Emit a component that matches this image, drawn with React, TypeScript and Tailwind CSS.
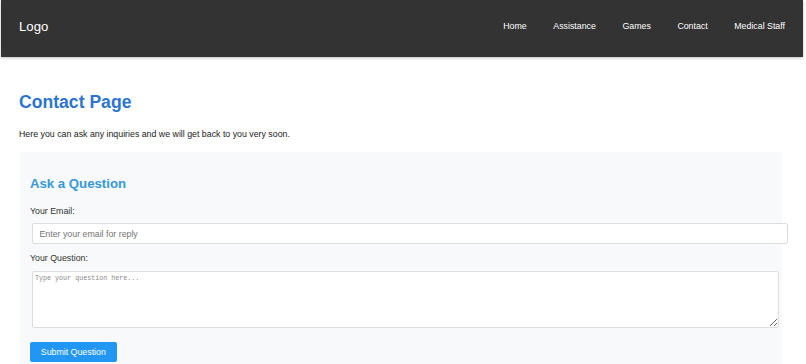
import { FC } from "react";

const Navbar: FC = () => {
  const nav_links = ["Home", "Assistance", "Games", "Contact", "Medical Staff"];

  return (
    <header className="ml-[1px] w-[802px] h-[57px] bg-[#333333] shadow-[0_1px_3px_rgba(0,0,0,0.25)] flex items-center justify-between pl-[18px] pr-[18px] pb-[4px]">
      <h1 className="text-white text-[13.2px] leading-[16px] font-normal">Logo</h1>
      <nav className="flex gap-[26.6px]">
        {nav_links.map((link) => (
          <a key={link} href="#" className="text-white text-[8.8px] leading-[11px]">
            {link}
          </a>
        ))}
      </nav>
    </header>
  );
};

const ContactForm: FC = () => {
  return (
    <section className="ml-[1px] mt-[12px] w-[762px] bg-[#f8f9fa] pl-[10px] pt-[24px] pb-[20px]">
      <h3 className="text-[#3498db] text-[13.2px] leading-[16px] font-bold">Ask a Question</h3>
      <label className="block mt-[14.5px] text-[8.8px] leading-[11px] text-[#333]">Your Email:</label>
      <input
        type="email"
        placeholder="Enter your email for reply"
        className="block ml-[2px] mt-[6px] w-[755.6px] h-[21px] px-[6.5px] bg-white border border-[#dddddd] rounded-[2px] text-[8.8px] placeholder:text-[#757575] outline-none"
      />
      <label className="block mt-[9px] text-[8.8px] leading-[11px] text-[#333]">Your Question:</label>
      <textarea
        placeholder="Type your question here..."
        className="block ml-[2px] mt-[6.5px] w-[746.6px] h-[57.3px] px-[2px] py-[2px] bg-white border border-[#dddddd] rounded-[2px] text-[6.7px] leading-[8px] font-['Liberation_Mono',monospace] placeholder:text-[#8a8a8a] outline-none"
      />
      <button className="block mt-[14.4px] h-[20px] px-[10.8px] bg-[#2196f3] text-white text-[8.8px] leading-[11px] rounded-[2px]">
        Submit Question
      </button>
    </section>
  );
};

export default function App() {
  return (
    <div className="min-h-[364px] bg-white font-['Liberation_Sans',Arial,sans-serif]">
      <Navbar />
      <main className="pl-[19px]">
        <h2 className="mt-[35px] text-[#2d74d0] text-[17.6px] leading-[20px] font-bold">Contact Page</h2>
        <p className="mt-[16.5px] text-[8.8px] leading-[11px] text-[#222]">
          Here you can ask any inquiries and we will get back to you very soon.
        </p>
        <ContactForm />
      </main>
    </div>
  );
}
